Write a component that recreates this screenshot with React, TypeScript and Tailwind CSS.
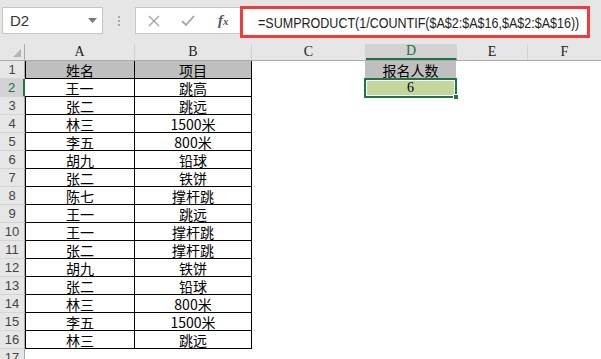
import React from "react";

const rows: [string, string][] = [
  ["王一", "跳高"],
  ["张二", "跳远"],
  ["林三", "1500米"],
  ["李五", "800米"],
  ["胡九", "铅球"],
  ["张二", "铁饼"],
  ["陈七", "撑杆跳"],
  ["王一", "跳远"],
  ["王一", "撑杆跳"],
  ["张二", "撑杆跳"],
  ["胡九", "铁饼"],
  ["张二", "铅球"],
  ["林三", "800米"],
  ["李五", "1500米"],
  ["林三", "跳远"],
];

const cjk = { fontFamily: '"Noto Sans CJK SC", "Noto Sans", sans-serif' };
const serif = { fontFamily: '"Liberation Serif", "DejaVu Serif", serif' };
const sans = { fontFamily: '"Liberation Sans", Arial, sans-serif' };

function RowHeader({ n, selected }: { n: number; selected?: boolean }) {
  return (
    <div
      className={`h-[18px] w-[25px] shrink-0 flex items-center justify-center border-b border-[#d4d4d4] text-[13px] leading-none ${
        selected
          ? "bg-[#d2d2d2] text-[#217346] border-r-2 border-r-[#217346]"
          : "bg-[#e6e6e6] text-[#444] border-r border-r-[#ababab]"
      }`}
      style={sans}
    >
      {n}
    </div>
  );
}

export default function App() {
  return (
    <div className="w-[601px] h-[359px] overflow-hidden bg-white relative select-none">
      {/* formula bar area */}
      <div className="h-[44px] bg-[#e6e6e6] flex items-start">
        <div className="ml-[2px] mt-[7px] w-[101px] h-[27px] bg-white border border-[#c6c6c6] flex items-center justify-between pl-[7px] pr-[5px]">
          <span className="text-[15px] text-[#333] leading-none" style={sans}>
            D2
          </span>
          <svg width="9" height="5" viewBox="0 0 9 5">
            <path d="M0 0 L9 0 L4.5 5 Z" fill="#777" />
          </svg>
        </div>
        <div className="w-[32px] mt-[16px] flex flex-col items-center gap-[2px]">
          <div className="w-[2px] h-[2px] bg-[#a8a8a8]" />
          <div className="w-[2px] h-[2px] bg-[#a8a8a8]" />
          <div className="w-[2px] h-[2px] bg-[#a8a8a8]" />
        </div>
        <div className="mt-[7px] w-[106px] h-[27px] bg-white border border-[#c6c6c6] flex items-center">
          <svg width="12" height="12" viewBox="0 0 12 12" className="ml-[12px]">
            <path d="M1 1 L11 11 M11 1 L1 11" stroke="#a6a6a6" strokeWidth="1.4" />
          </svg>
          <svg width="14" height="12" viewBox="0 0 14 12" className="ml-[21px]">
            <path d="M1 6 L5 10 L13 1" stroke="#a6a6a6" strokeWidth="1.8" fill="none" />
          </svg>
          <span
            className="ml-[23px] text-[15px] italic text-[#555] font-bold leading-none"
            style={serif}
          >
            f<span className="text-[11px]">x</span>
          </span>
        </div>
        <div className="mt-[6px] ml-[-1px] w-[350px] h-[32px] border-[3px] border-[#f23c3c] bg-white flex items-center pl-[15px] overflow-hidden">
          <span
            className="text-[15px] text-[#222] whitespace-nowrap leading-none inline-block shrink-0 origin-left scale-x-[0.835]"
            style={sans}
          >
            =SUMPRODUCT(1/COUNTIF($A$2:$A$16,$A$2:$A$16))
          </span>
        </div>
      </div>

      {/* column header row */}
      <div className="flex h-[17px] bg-[#e6e6e6] border-b border-[#ababab]">
        <div className="w-[25px] shrink-0 border-r border-[#ababab] relative">
          <svg width="8" height="8" viewBox="0 0 8 8" className="absolute right-[3px] bottom-[3px]">
            <path d="M8 0 L8 8 L0 8 Z" fill="#b4b4b4" />
          </svg>
        </div>
        {[
          ["A", 110],
          ["B", 117],
          ["C", 114],
        ].map(([l, w]) => (
          <div
            key={l as string}
            className="shrink-0 border-r border-[#d0d0d0] flex items-center justify-center text-[14px] text-[#222] leading-none"
            style={{ ...serif, width: w as number }}
          >
            {l}
          </div>
        ))}
        <div
          className="w-[91px] shrink-0 border-r border-[#d0d0d0] bg-[#d2d2d2] border-b-2 border-b-[#217346] flex items-center justify-center text-[14px] text-[#217346] leading-none"
          style={serif}
        >
          D
        </div>
        <div
          className="w-[71px] shrink-0 border-r border-[#d0d0d0] flex items-center justify-center text-[14px] text-[#222] leading-none"
          style={serif}
        >
          E
        </div>
        <div
          className="w-[73px] shrink-0 flex items-center justify-center text-[14px] text-[#222] leading-none"
          style={serif}
        >
          F
        </div>
      </div>

      {/* row 1 */}
      <div className="flex h-[18px]">
        <RowHeader n={1} />
        <div
          className="w-[110px] shrink-0 bg-[#bfbfbf] border-l border-b border-r border-black flex items-center justify-center text-[14px] text-black leading-none"
          style={cjk}
        >
          姓名
        </div>
        <div
          className="w-[117px] shrink-0 bg-[#bfbfbf] border-b border-r border-black flex items-center justify-center text-[14px] text-black leading-none"
          style={cjk}
        >
          项目
        </div>
        <div className="w-[113px] shrink-0" />
        <div
          className="w-[91px] shrink-0 bg-[#bfbfbf] flex items-center justify-center text-[14px] text-black leading-none"
          style={cjk}
        >
          报名人数
        </div>
      </div>

      {rows.map(([a, b], i) => (
        <div key={i} className="flex h-[18px]">
          <RowHeader n={i + 2} selected={i === 0} />
          <div
            className={`w-[110px] shrink-0 border-b border-r border-black flex items-center justify-center text-[14px] text-black leading-none ${
              i === 0 ? "" : "border-l"
            }`}
            style={cjk}
          >
            {a}
          </div>
          <div
            className="w-[117px] shrink-0 border-b border-r border-black flex items-center justify-center text-[14px] text-black leading-none"
            style={cjk}
          >
            {b}
          </div>
          {i === 0 && (
            <>
              <div className="w-[112px] shrink-0" />
              <div className="w-[93px] shrink-0 relative border-2 border-[#217346] mt-[-1px] h-[20px]">
                <div
                  className="h-full border border-white bg-[#c4d79b] flex items-center justify-center text-[14px] text-black leading-none"
                  style={serif}
                >
                  6
                </div>
                <div className="absolute right-[-4px] bottom-[-4px] w-[6px] h-[6px] bg-[#217346] border border-white" />
              </div>
            </>
          )}
        </div>
      ))}
      <div className="flex h-[18px]">
        <RowHeader n={17} />
      </div>
    </div>
  );
}
